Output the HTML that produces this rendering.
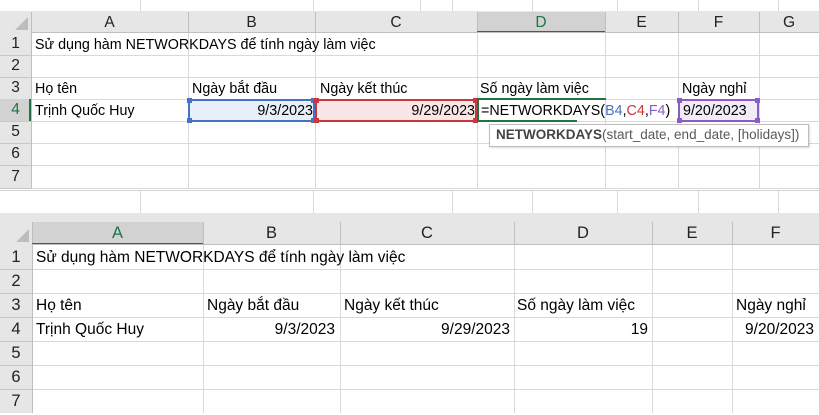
<!DOCTYPE html>
<html><head><meta charset="utf-8"><style>
*{margin:0;padding:0;box-sizing:border-box}
body{width:819px;height:415px;overflow:hidden;background:#fff;font-family:"Liberation Sans",Arial,sans-serif;position:relative;color:#000}
.a{position:absolute}
.t{position:absolute;white-space:nowrap;line-height:1}
</style></head><body>
<div id="g"></div>

<div class="t" style="left:35px;top:38px;font-size:14.3px">Sử dụng hàm NETWORKDAYS để tính ngày làm việc</div>
<div class="t" style="left:35px;top:82px;font-size:14.3px">Họ tên</div>
<div class="t" style="left:35px;top:104px;font-size:14.3px">Trịnh Quốc Huy</div>
<div class="t" style="left:192px;top:82px;font-size:14.3px">Ngày bắt đầu</div>
<div class="t" style="left:320px;top:82px;font-size:14.3px">Ngày kết thúc</div>
<div class="t" style="left:480px;top:82px;font-size:14.3px">Số ngày làm việc</div>
<div class="t" style="left:682px;top:82px;font-size:14.3px">Ngày nghỉ</div>

<div class="t" style="left:36px;top:250px;font-size:15.5px">Sử dụng hàm NETWORKDAYS để tính ngày làm việc</div>
<div class="t" style="left:36px;top:298px;font-size:15.5px">Họ tên</div>
<div class="t" style="left:36px;top:322px;font-size:15.5px">Trịnh Quốc Huy</div>
<div class="t" style="left:207px;top:298px;font-size:15.5px">Ngày bắt đầu</div>
<div class="t" style="right:484px;top:322px;font-size:15.5px">9/3/2023</div>
<div class="t" style="left:344px;top:298px;font-size:15.5px">Ngày kết thúc</div>
<div class="t" style="right:309px;top:322px;font-size:15.5px">9/29/2023</div>
<div class="t" style="left:517px;top:298px;font-size:15.5px">Số ngày làm việc</div>
<div class="t" style="right:171px;top:322px;font-size:15.5px">19</div>
<div class="t" style="left:736px;top:298px;font-size:15.5px">Ngày nghỉ</div>
<div class="t" style="right:5px;top:322px;font-size:15.5px">9/20/2023</div>

<script>
var g=document.getElementById('g');
function R(x,y,w,h,c,extra){var d=document.createElement('div');d.className='a';d.style.cssText='left:'+x+'px;top:'+y+'px;width:'+w+'px;height:'+h+'px;background:'+c+';'+(extra||'');g.appendChild(d);return d;}
function T(x,y,w,h,s,fs,col){var d=R(x,y,w,h,'transparent','display:flex;align-items:center;justify-content:center;font-size:'+fs+'px;color:'+(col||'#222'));d.textContent=s;return d;}
R(0,0,819,11,'#fff');
[140,313,420,452,532,617,698,778].forEach(function(x){R(x,0,1,11,'#d9d9d9');});
R(0,190,819,1,'#d4d4d4');R(0,213,819,1,'#e0e0e0');
[140,313,452,532,617,698,778].forEach(function(x){R(x,191,1,22,'#d9d9d9');});
function grid(cols,rows,hy,fs,letters,selCol,selRow,bandTop){
  var top=rows[0];
  R(0,bandTop,819,top-bandTop,'#e6e6e6');
  R(0,top,cols[1],rows[rows.length-1]-top,'#e6e6e6');
  R(cols[1]-16,top-16,13,13,'#bdbdbd','clip-path:polygon(100% 0,100% 100%,0 100%)');
  for(var i=1;i<cols.length-1;i++){
    var sel=(i-1)==selCol;
    R(cols[i],hy,cols[i+1]-cols[i],top-hy,sel?'#d2d2d2':'#e6e6e6');
    R(cols[i],hy,1,top-hy,'#bfbfbf');
    T(cols[i],hy,cols[i+1]-cols[i],top-hy,letters[i-1],fs,sel?'#217346':'#222');
    if(sel)R(cols[i],top-2,cols[i+1]-cols[i],2,'#217346');
  }
  R(cols[1],top-1,819-cols[1],1,'#bfbfbf');
  for(var r=0;r<rows.length-1;r++){
    var sel=r==selRow;
    if(sel){R(0,rows[r],cols[1],rows[r+1]-rows[r],'#d2d2d2');R(cols[1]-2,rows[r],2,rows[r+1]-rows[r],'#217346');}
    T(0,rows[r],cols[1],rows[r+1]-rows[r],String(r+1),fs,sel?'#217346':'#222');
    R(0,rows[r+1],cols[1],1,'#c8c8c8');
    R(cols[1],rows[r+1],819-cols[1],1,'#d9d9d9');
  }
  for(var i=2;i<cols.length-1;i++)R(cols[i],top,1,rows[rows.length-1]-top,'#d9d9d9');
  R(cols[1],top,1,rows[rows.length-1]-top,'#bfbfbf');
}
grid([0,31,188,315,477,605,678,759,819],[33,55,77,99,121,143,165,188],12,15.5,['A','B','C','D','E','F','G'],3,3,11);
grid([0,32,203,340,514,652,732,819],[245,269,293,317,341,365,389,413],222,16.5,['A','B','C','D','E','F'],0,-1,213);
R(0,413,819,2,'#fff');
function box(x,y,w,h,fill,bc){R(x,y,w,h,fill);R(x,y,w,2,bc);R(x,y+h-2,w,2,bc);R(x,y,2,h,bc);R(x+w-2,y,2,h,bc);
 [[x-1,y-1],[x+w-4,y-1],[x-1,y+h-4],[x+w-4,y+h-4]].forEach(function(p){R(p[0],p[1],5,5,bc);});}
box(188,99,127,23,'#e9eff9','#4472c4');
box(315,99,162,23,'#fbe6e7','#c8373e');
box(678,99,81,23,'#f1ecf8','#8a5cc5');
R(478,100,127,21,'#fff');R(477,98,129,2,'#217346');R(477,120,100,2,'#217346');R(477,99,2,23,'#217346');
</script>
<div class="t" style="right:506px;top:104px;font-size:14.3px">9/3/2023</div>
<div class="t" style="right:344px;top:104px;font-size:14.3px">9/29/2023</div>
<div class="t" style="left:683px;top:104px;font-size:14.3px">9/20/2023</div>
<div class="t" style="left:481px;top:104px;font-size:14.3px">=NETWORKDAYS(<span style="color:#4472c4">B4</span>,<span style="color:#d13438">C4</span>,<span style="color:#8a5cc5">F4</span>)</div>
<div class="a" style="left:489px;top:124px;width:320px;height:23px;background:#fff;border:1px solid #bdbdbd;box-shadow:1px 1px 2px rgba(0,0,0,.15)"></div>
<div class="t" style="left:496px;top:128px;font-size:13.5px;color:#5a5a5a"><b style="color:#444">NETWORKDAYS</b>(start_date, end_date, [holidays])</div>
</body></html>
